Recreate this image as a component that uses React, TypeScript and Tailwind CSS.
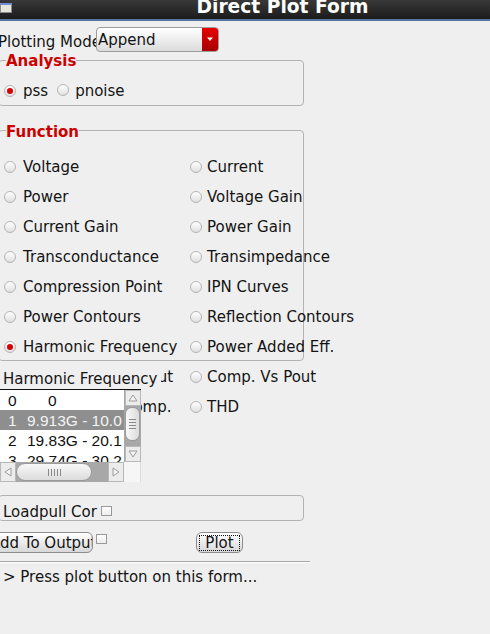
import React from 'react';

const leftItems = [
  'Voltage',
  'Power',
  'Current Gain',
  'Transconductance',
  'Compression Point',
  'Power Contours',
  'Harmonic Frequency',
  'Power Gain Vs. Pout',
  'Pout Vs Gain Comp.',
];

const rightItems = [
  'Current',
  'Voltage Gain',
  'Power Gain',
  'Transimpedance',
  'IPN Curves',
  'Reflection Contours',
  'Power Added Eff.',
  'Comp. Vs Pout',
  'THD',
];

const listRows = [
  { idx: '0', value: '0', selected: false, center: true },
  { idx: '1', value: '9.913G - 10.0', selected: true, center: false },
  { idx: '2', value: '19.83G - 20.1', selected: false, center: false },
  { idx: '3', value: '29.74G - 30.2', selected: false, center: false },
];

const Radio = ({ checked = false }: { checked?: boolean }) => (
  <span className="inline-flex h-[12px] w-[12px] shrink-0 items-center justify-center rounded-full border border-[#b4b4b4] bg-linear-to-b from-white to-[#e0e0e0]">
    {checked && <span className="h-[6px] w-[6px] rounded-full bg-[#d60000]" />}
  </span>
);

const Checkbox = () => (
  <span className="inline-block h-[10px] w-[11px] shrink-0 border border-[#9a9a9a] bg-linear-to-b from-white to-[#ececec]" />
);

const Arrow = ({ dir }: { dir: 'up' | 'down' | 'left' | 'right' }) => {
  const pts = {
    up: '2,9 6,3 10,9',
    down: '2,3 6,9 10,3',
    left: '9,2 3,6 9,10',
    right: '3,2 9,6 3,10',
  }[dir];
  return (
    <svg width="12" height="12" viewBox="0 0 12 12">
      <polygon points={pts} fill="#f4f4f4" stroke="#9c9c9c" strokeWidth="1" />
    </svg>
  );
};

export default function App() {
  return (
    <div className="relative h-[634px] w-[490px] overflow-hidden bg-[#efefef] font-['DejaVu_Sans',sans-serif] text-[15px] leading-[17px] text-[#141414]">
      {/* title bar */}
      <div className="relative h-[21px] border-b-2 border-[#5675a0] bg-linear-to-b from-[#383838] to-[#1c1c1c]">
        <div className="absolute left-0 top-[3px] h-[10px] w-[12px] border border-[#8a8a8a] border-t-2 border-t-[#6d8fd8] bg-[#e6e6de]" />
        <div className="flex justify-center pl-[75px]">
          <span className="-mt-[4px] text-[18.67px] font-bold leading-[22px] text-white">Direct Plot Form</span>
        </div>
      </div>

      {/* plotting mode */}
      <div className="mt-[6px] flex h-[25px] items-center">
        <span className="-ml-[2px] mt-[5px] w-[98px] whitespace-nowrap">Plotting Mode</span>
        <div className="relative z-10 flex h-[25px] w-[123px] overflow-hidden rounded-[4px] border border-[#9d9d9d] bg-linear-to-b from-white to-[#dcdcdc]">
          <span className="flex-1 pl-[1px] pt-[4px]">Append</span>
          <span className="flex w-[16px] items-center justify-center bg-linear-to-b from-[#e80000] to-[#a80000]">
            <svg width="8" height="5" viewBox="0 0 8 5">
              <polygon points="1,0.5 7,0.5 4,4" fill="#ffffff" />
            </svg>
          </span>
        </div>
      </div>

      {/* analysis */}
      <div className="relative -ml-[2px] mt-[8px] h-[46px] w-[306px] rounded-[4px] border border-[#b2b2b2]">
        <span className="absolute left-[7px] -top-[8px] bg-[#efefef] text-[15px] font-bold text-[#cc0000]">Analysis</span>
        <div className="mt-[20px] flex h-[20px] items-center pl-[5px]">
          <Radio checked />
          <span className="ml-[7px]">pss</span>
          <span className="ml-[9px]"><Radio /></span>
          <span className="ml-[6px]">pnoise</span>
        </div>
      </div>

      {/* function */}
      <div className="relative -ml-[2px] mt-[24px] h-[231px] w-[306px] rounded-[4px] border border-[#b2b2b2]">
        <span className="absolute left-[7px] -top-[7px] bg-[#efefef] text-[15px] font-bold text-[#cc0000]">Function</span>
        <div className="grid grid-cols-[186px_200px] pl-[5px] pt-[21px]">
          {leftItems.map((l, i) => (
            <React.Fragment key={l}>
              <div className="flex h-[30px] items-center gap-[7px] whitespace-nowrap">
                <Radio checked={l === 'Harmonic Frequency'} />
                <span>{l}</span>
              </div>
              <div className="flex h-[30px] items-center gap-[5px] whitespace-nowrap">
                <Radio />
                <span>{rightItems[i]}</span>
              </div>
            </React.Fragment>
          ))}
        </div>
      </div>

      {/* harmonic frequency list, sits over the function rows */}
      <div className="absolute left-0 top-[367px] z-20">
        <div className="h-[22px] w-[161px] bg-[#efefef] pl-[3px] pt-[4px] whitespace-nowrap">Harmonic Frequency</div>
        <div className="w-[141px] border-t border-[#111] bg-white font-['Liberation_Sans',sans-serif] text-[15.5px]">
          <div className="flex h-[72px]">
            <div className="h-[72px] w-[124px] overflow-hidden">
              {listRows.map(r => (
                <div
                  key={r.idx}
                  className={`flex h-[20px] items-center whitespace-nowrap ${r.selected ? 'bg-[#8e8e8e] text-[#f4f4f4]' : 'text-[#111]'}`}
                >
                  <span className="w-[27px] pl-[8px]">{r.idx}</span>
                  <span className={r.center ? 'pl-[21px]' : ''}>{r.value}</span>
                </div>
              ))}
            </div>
            <div className="flex w-[17px] flex-col items-center bg-[#a8a8a8]">
              <div className="flex h-[16px] w-[16px] items-center justify-center border border-[#b8b8b8] bg-[#ececec]">
                <Arrow dir="up" />
              </div>
              <div className="mt-[1px] flex h-[34px] w-[15px] flex-col items-center justify-center gap-[2px] rounded-[7px] border border-[#9a9a9a] bg-linear-to-r from-[#f8f8f8] to-[#dcdcdc]">
                <span className="h-[1px] w-[7px] bg-[#8a8a8a]" />
                <span className="h-[1px] w-[7px] bg-[#8a8a8a]" />
                <span className="h-[1px] w-[7px] bg-[#8a8a8a]" />
                <span className="h-[1px] w-[7px] bg-[#8a8a8a]" />
              </div>
              <div className="flex-1" />
              <div className="flex h-[16px] w-[16px] items-center justify-center border border-[#b8b8b8] bg-[#ececec]">
                <Arrow dir="down" />
              </div>
            </div>
          </div>
          <div className="flex h-[20px] bg-[#efefef]">
            <div className="flex w-[124px] items-center bg-[#a8a8a8]">
              <div className="flex h-[20px] w-[16px] items-center justify-center border border-[#b8b8b8] bg-[#ececec]">
                <Arrow dir="left" />
              </div>
              <div className="flex h-[18px] w-[76px] items-center justify-center gap-[2px] rounded-[9px] border border-[#9a9a9a] bg-linear-to-b from-[#f8f8f8] to-[#dcdcdc]">
                <span className="h-[7px] w-[1px] bg-[#8a8a8a]" />
                <span className="h-[7px] w-[1px] bg-[#8a8a8a]" />
                <span className="h-[7px] w-[1px] bg-[#8a8a8a]" />
                <span className="h-[7px] w-[1px] bg-[#8a8a8a]" />
                <span className="h-[7px] w-[1px] bg-[#8a8a8a]" />
              </div>
              <div className="flex-1" />
              <div className="flex h-[20px] w-[16px] items-center justify-center border border-[#b8b8b8] bg-[#ececec]">
                <Arrow dir="right" />
              </div>
            </div>
            <div className="flex-1 border-r border-[#dcdcdc] bg-[#f6f6f6]" />
          </div>
        </div>
      </div>

      {/* loadpull */}
      <div className="-ml-[2px] mt-[134px] h-[26px] w-[306px] rounded-[4px] border border-[#b2b2b2]">
        <div className="flex items-start pl-[4px] pt-[8px]">
          <span className="w-[98px] whitespace-nowrap">Loadpull Cor</span>
          <span className="-mt-[1px]"><Checkbox /></span>
        </div>
      </div>

      {/* buttons */}
      <div className="mt-[11px] flex h-[21px] items-center">
        <button className="-ml-[16px] h-[21px] w-[109px] overflow-hidden whitespace-nowrap rounded-[6px] border border-[#8c8c8c] bg-linear-to-b from-white to-[#d8d8d8] pl-[5px] pt-[1px] text-left">
          Add To Output
        </button>
        <span className="ml-[3px] -mt-[6px]"><Checkbox /></span>
        <button className="ml-[89px] flex h-[21px] w-[47px] items-center justify-center rounded-[6px] border border-[#8c8c8c] bg-linear-to-b from-white to-[#d8d8d8]">
          <span className="border border-dotted border-[#111] px-[5px] leading-[14px]">Plot</span>
        </button>
      </div>

      {/* separator + status */}
      <div className="mt-[8px] w-[310px] border-t border-[#a6a6a6] border-b border-b-white" />
      <div className="mt-[6px] pl-[3px]">&gt; Press plot button on this form...</div>
    </div>
  );
}
